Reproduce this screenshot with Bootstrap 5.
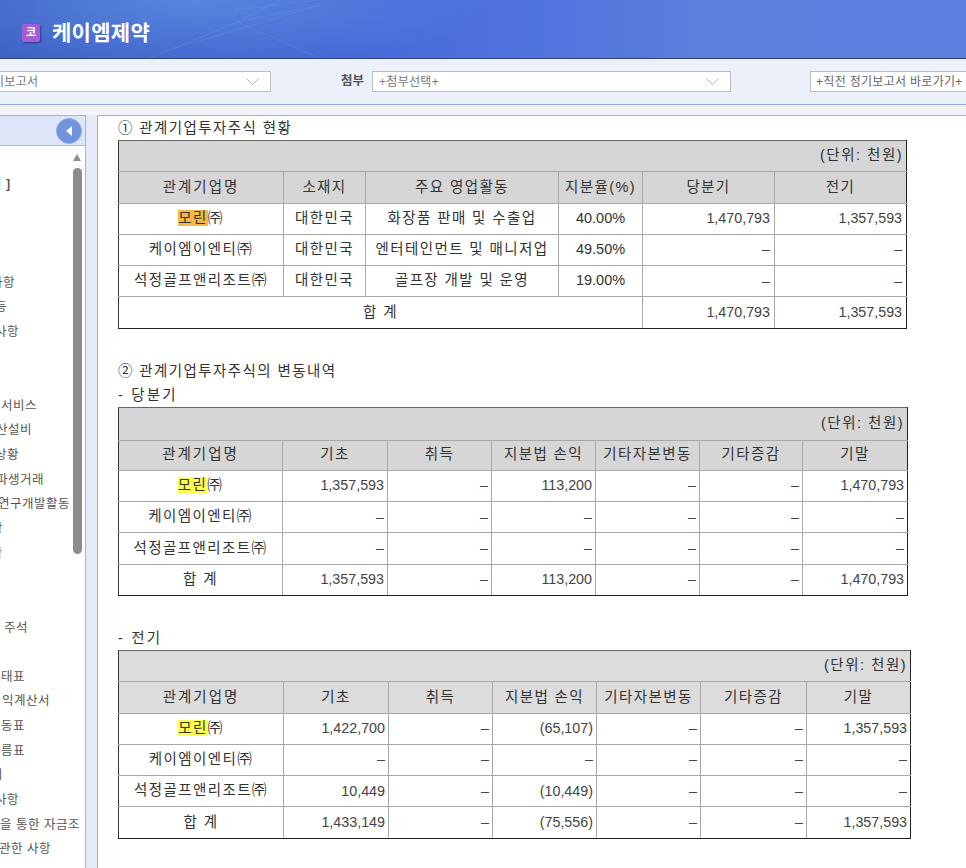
<!DOCTYPE html>
<html lang="ko">
<head>
  <meta charset="UTF-8" />
  <meta name="viewport" content="width=device-width, initial-scale=1.0"/>
  <title>케이엠제약</title>
  <link href="https://cdn.jsdelivr.net/npm/bootstrap@5.3.3/dist/css/bootstrap.min.css" rel="stylesheet">
  <style>
    body {
      font-family: "Liberation Sans", "Noto Sans CJK KR", sans-serif;
      color: #333;
      background: #f1f4fb;
      height: 100vh;
      overflow: hidden;
    }

    .hd-bar {
      height: 59px;
      padding-left: 22px;
      padding-top: 7px;
      border-bottom: 1px solid #2c437f;
      background:
        radial-gradient(ellipse 300px 70px at 190px 0, rgba(110,165,235,.5), rgba(110,165,235,0)),
        linear-gradient(90deg, #3d63c6 0%, #4569d6 35%, #4d70dd 50%, #5a7fdd 72%, #5c80df 100%);
    }

    .hd-lines { position: absolute; left: 130px; top: 0; }

    .hd-logo {
      width: 18px;
      height: 18px;
      border-radius: 2px;
      background: #a45cd8;
      color: #fff;
      font-size: 11px;
      font-weight: 700;
      box-shadow: 1px 1px 2px rgba(30,30,90,.6);
    }

    .hd-title {
      font-size: 21px;
      font-weight: 700;
      color: #fff;
      letter-spacing: .3px;
      margin-left: 12px;
    }

    .tool-bar {
      height: 46px;
      background: #ebf0fb;
      border-bottom: 1px solid #8ea9dc;
      white-space: nowrap;
    }

    .sel-box {
      height: 21px;
      background: #fff;
      border: 1px solid #bdbdbd;
      font-size: 12px;
      letter-spacing: .3px;
      color: #777;
      padding: 0 11px 0 6px;
      flex: none;
    }

    .sel-a { width: 288px; margin-left: -17px; padding-left: 9px; }
    .sel-b { width: 359px; }
    .sel-c { width: 170px; margin-left: 79px; padding-left: 5px; color: #666; }
    .tool-label { font-size: 12.5px; font-weight: 700; color: #555; margin-left: 70px; margin-right: 8px; }

    .body-wrap { padding-top: 10px; height: 763px; }

    .side-pane {
      width: 86px;
      background: #fff;
      border-top: 1px solid #9db4e0;
      border-right: 1px solid #9db4e0;
      flex: none;
    }

    .side-head {
      height: 30px;
      background: #dde6f7;
      border-bottom: 1px solid #a9bee6;
      padding-right: 3px;
    }

    .side-btn {
      width: 26px;
      height: 26px;
      border: 1px solid #8fa9e0;
      border-radius: 50%;
      background: #6f93dc;
    }

    .side-list {
      margin: 0;
      padding: 26px 0 0;
      list-style: none;
      font-size: 12.5px;
      letter-spacing: .5px;
      color: #555;
      white-space: nowrap;
    }

    .side-list li { height: 24.65px; line-height: 24.65px; }
    .s-n10 { margin-left: -10px; }
    .s-n9 { margin-left: -9px; }
    .s-n5 { margin-left: -5px; }
    .s-n4 { margin-left: -4px; }
    .s-n2 { margin-left: -2px; }
    .s-n1 { margin-left: -1px; }
    .s-1 { margin-left: 1px; }
    .s-2 { margin-left: 2px; }
    .s-4 { margin-left: 4px; }
    .txt-blue { color: #3c8ce0; }
    .txt-orange { color: #b98a2c; }

    .scroll-arrow {
      position: absolute;
      left: 73px;
      top: 38px;
      width: 0;
      height: 0;
      border-left: 4.5px solid transparent;
      border-right: 4.5px solid transparent;
      border-bottom: 7px solid #8c8c8c;
    }

    .scroll-thumb {
      position: absolute;
      left: 73px;
      top: 52px;
      width: 9px;
      height: 386px;
      border-radius: 5px;
      background: #8c8c8c;
    }

    .split-bar { width: 11px; background: #e5eaf8; flex: none; }

    .main-pane {
      background: #fff;
      border-top: 1px solid #9db4e0;
      border-left: 1px solid #9db4e0;
      padding-left: 20px;
    }

    .sec-title {
      font-size: 14.5px;
      letter-spacing: 1.4px;
      color: #333;
      line-height: 24px;
      height: 24px;
      white-space: nowrap;
    }

    .sec-sub { letter-spacing: 2.2px; }

    .fin-tb {
      --bs-table-bg: transparent;
      --bs-table-border-color: #a8a8a8;
      table-layout: fixed;
      height: 188px;
      font-size: 14.5px;
      color: #333;
      border-collapse: collapse;
      margin-bottom: 0;
    }

    .fin-tb td {
      padding: 0 3px;
      height: 31.3px;
      vertical-align: middle;
      text-align: center;
      white-space: nowrap;
      overflow: hidden;
      border: 1px solid #a8a8a8;
    }

    .fin-tb tr:first-child td { border-top-color: #666; }
    .fin-tb tr:last-child td { border-bottom-color: #222; }
    .fin-tb td:first-child { border-left-color: #333; }
    .fin-tb td:last-child { border-right-color: #222; }
    .fin-tb tr:first-child td, .fin-tb tr:nth-child(2) td { background: #d6d6d6; }
    .tb-light tr:first-child td, .tb-light tr:nth-child(2) td { background: #dcdcdc; }
    .fin-tb td.num { text-align: right; font-size: 14.3px; color: #444; }
    .fin-tb td.unit { text-align: right; letter-spacing: 1.5px; padding-right: 3px; }
    .tb-one td.num { padding-right: 4px; }
    .tb-two tr:first-child td { height: 33px; }
    .tb-two tr:nth-child(2) td { height: 30px; }
    .hg { letter-spacing: 2px; padding-left: 6px; }
    .hg-w { letter-spacing: 1.4px; }
    .hl-o { background: #f4b942; }
    .hl-y { background: #ffff4d; }

    .tb-one { width: 788px; }
    .tb-two { width: 789px; }
    .tb-three { width: 792px; }

    .c-165 { width: 165px; }
    .c-164 { width: 164px; }
    .c-82 { width: 82px; }
    .c-193 { width: 193px; }
    .c-84 { width: 84px; }
    .c-132 { width: 132px; }
    .c-105 { width: 105px; }
    .c-104 { width: 104px; }
    .c-103 { width: 103px; }
    .c-106 { width: 106px; }

    .gap-one { height: 30px; }
    .gap-two { height: 30px; }
  </style>
</head>
<body>
  <div class="hd-bar position-relative d-flex align-items-center">
    <svg class="hd-lines" width="240" height="58" viewBox="0 0 240 58" fill="none" stroke="#9cc0f0" stroke-opacity=".14">
      <path d="M105 10L190 0M105 10L107 22L190 58M107 22L45 48L20 58M107 22L190 5M107 22L150 0M45 48L190 5"/>
    </svg>
    <span class="hd-logo d-flex align-items-center justify-content-center position-relative">코</span>
    <span class="hd-title position-relative">케이엠제약</span>
  </div>

  <div class="tool-bar d-flex align-items-center overflow-hidden">
    <div class="sel-box sel-a d-flex align-items-center justify-content-between">
      <span>기보고서</span>
      <svg width="13" height="7" viewBox="0 0 13 7" fill="none" stroke="#b5b5b5"><path d="M.5 .5L6.5 6.5L12.5 .5"/></svg>
    </div>
    <span class="tool-label">첨부</span>
    <div class="sel-box sel-b d-flex align-items-center justify-content-between">
      <span>+첨부선택+</span>
      <svg width="13" height="7" viewBox="0 0 13 7" fill="none" stroke="#b5b5b5"><path d="M.5 .5L6.5 6.5L12.5 .5"/></svg>
    </div>
    <div class="sel-box sel-c d-flex align-items-center">
      <span>+직전 정기보고서 바로가기+</span>
    </div>
  </div>

  <div class="body-wrap d-flex">
    <div class="side-pane position-relative overflow-hidden">
      <div class="side-head d-flex align-items-center justify-content-end">
        <span class="side-btn d-flex align-items-center justify-content-center">
          <svg width="7" height="10" viewBox="0 0 7 10"><path d="M6 0V10L0 5Z" fill="#fff"/></svg>
        </span>
      </div>
      <ul class="side-list">
        <li class="s-n10"><span class="txt-blue">건</span> <b>]</b></li>
        <li>&nbsp;</li>
        <li>&nbsp;</li>
        <li>&nbsp;</li>
        <li class="s-n9">사항</li>
        <li class="s-n5">등</li>
        <li class="s-n5">사항</li>
        <li>&nbsp;</li>
        <li>&nbsp;</li>
        <li class="s-1">서비스</li>
        <li class="s-n4">산설비</li>
        <li class="s-n5">상황</li>
        <li class="s-n4">파생거래</li>
        <li class="s-n2">연구개발활동</li>
        <li class="s-n9">항</li>
        <li class="s-n9 txt-orange">항</li>
        <li>&nbsp;</li>
        <li>&nbsp;</li>
        <li class="s-4">주석</li>
        <li>&nbsp;</li>
        <li class="s-1">태표</li>
        <li class="s-2">익계산서</li>
        <li class="s-1">동표</li>
        <li class="s-1">름표</li>
        <li class="s-n9">서</li>
        <li class="s-n5">사항</li>
        <li>을 통한 자금조</li>
        <li class="s-n1">관한 사항</li>
      </ul>
      <span class="scroll-arrow"></span>
      <span class="scroll-thumb"></span>
    </div>
    <div class="split-bar"></div>
    <div class="main-pane flex-grow-1 overflow-hidden">
      <div class="sec-title">① 관계기업투자주식 현황</div>
      <table class="table fin-tb tb-one">
        <colgroup><col class="c-165"><col class="c-82"><col class="c-193"><col class="c-84"><col class="c-132"><col class="c-132"></colgroup>
        <tr><td colspan="6" class="unit">(단위: 천원)</td></tr>
        <tr><td class="hg">관계기업명</td><td class="hg-w">소재지</td><td class="hg-w">주요 영업활동</td><td class="hg-w">지분율(%)</td><td class="hg-w">당분기</td><td class="hg-w">전기</td></tr>
        <tr><td class="hg-w"><span class="hl-o">모린</span>㈜</td><td class="hg-w">대한민국</td><td class="hg-w">화장품 판매 및 수출업</td><td>40.00%</td><td class="num">1,470,793</td><td class="num">1,357,593</td></tr>
        <tr><td class="hg-w">케이엠이엔티㈜</td><td class="hg-w">대한민국</td><td class="hg-w">엔터테인먼트 및 매니저업</td><td>49.50%</td><td class="num">–</td><td class="num">–</td></tr>
        <tr><td class="hg-w">석정골프앤리조트㈜</td><td class="hg-w">대한민국</td><td class="hg-w">골프장 개발 및 운영</td><td>19.00%</td><td class="num">–</td><td class="num">–</td></tr>
        <tr><td colspan="4" class="hg-w">합 계</td><td class="num">1,470,793</td><td class="num">1,357,593</td></tr>
      </table>

      <div class="gap-one"></div>
      <div class="sec-title">② 관계기업투자주식의 변동내역</div>
      <div class="sec-title sec-sub">- 당분기</div>
      <table class="table fin-tb tb-two">
        <colgroup><col class="c-164"><col class="c-105"><col class="c-104"><col class="c-104"><col class="c-104"><col class="c-103"><col class="c-105"></colgroup>
        <tr><td colspan="7" class="unit">(단위: 천원)</td></tr>
        <tr><td class="hg">관계기업명</td><td class="hg-w">기초</td><td class="hg-w">취득</td><td class="hg-w">지분법 손익</td><td class="hg-w">기타자본변동</td><td class="hg-w">기타증감</td><td class="hg-w">기말</td></tr>
        <tr><td class="hg-w"><span class="hl-y">모린</span>㈜</td><td class="num">1,357,593</td><td class="num">–</td><td class="num">113,200</td><td class="num">–</td><td class="num">–</td><td class="num">1,470,793</td></tr>
        <tr><td class="hg-w">케이엠이엔티㈜</td><td class="num">–</td><td class="num">–</td><td class="num">–</td><td class="num">–</td><td class="num">–</td><td class="num">–</td></tr>
        <tr><td class="hg-w">석정골프앤리조트㈜</td><td class="num">–</td><td class="num">–</td><td class="num">–</td><td class="num">–</td><td class="num">–</td><td class="num">–</td></tr>
        <tr><td class="hg-w">합 계</td><td class="num">1,357,593</td><td class="num">–</td><td class="num">113,200</td><td class="num">–</td><td class="num">–</td><td class="num">1,470,793</td></tr>
      </table>

      <div class="gap-two"></div>
      <div class="sec-title sec-sub">- 전기</div>
      <table class="table fin-tb tb-three tb-light">
        <colgroup><col class="c-165"><col class="c-105"><col class="c-104"><col class="c-104"><col class="c-104"><col class="c-106"><col class="c-104"></colgroup>
        <tr><td colspan="7" class="unit">(단위: 천원)</td></tr>
        <tr><td class="hg">관계기업명</td><td class="hg-w">기초</td><td class="hg-w">취득</td><td class="hg-w">지분법 손익</td><td class="hg-w">기타자본변동</td><td class="hg-w">기타증감</td><td class="hg-w">기말</td></tr>
        <tr><td class="hg-w"><span class="hl-y">모린</span>㈜</td><td class="num">1,422,700</td><td class="num">–</td><td class="num">(65,107)</td><td class="num">–</td><td class="num">–</td><td class="num">1,357,593</td></tr>
        <tr><td class="hg-w">케이엠이엔티㈜</td><td class="num">–</td><td class="num">–</td><td class="num">–</td><td class="num">–</td><td class="num">–</td><td class="num">–</td></tr>
        <tr><td class="hg-w">석정골프앤리조트㈜</td><td class="num">10,449</td><td class="num">–</td><td class="num">(10,449)</td><td class="num">–</td><td class="num">–</td><td class="num">–</td></tr>
        <tr><td class="hg-w">합 계</td><td class="num">1,433,149</td><td class="num">–</td><td class="num">(75,556)</td><td class="num">–</td><td class="num">–</td><td class="num">1,357,593</td></tr>
      </table>
    </div>
  </div>
  <script src="https://cdn.jsdelivr.net/npm/bootstrap@5.3.3/dist/js/bootstrap.bundle.min.js"></script>
</body>
</html>
